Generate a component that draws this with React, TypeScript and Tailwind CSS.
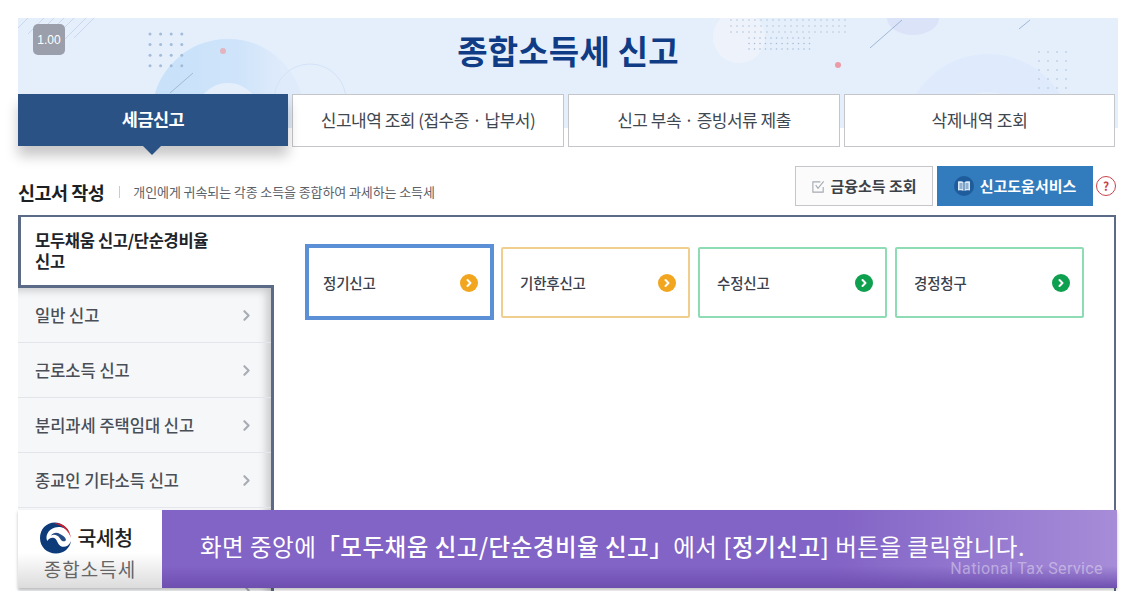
import React from "react";
import { ChevronRight } from "lucide-react";

const kr = { fontFamily: '"Noto Sans CJK KR", "Noto Sans", sans-serif' };

function Dots({ cols, rows, gap, r, color }: { cols: number; rows: number; gap: number; r: number; color: string }) {
  const out: React.ReactNode[] = [];
  for (let i = 0; i < cols; i++) for (let j = 0; j < rows; j++) out.push(<circle key={i + "-" + j} cx={i * gap + 2} cy={j * gap + 2} r={r} fill={color} />);
  return <g>{out}</g>;
}

function BandArt() {
  return (
    <svg className="absolute inset-0 h-full w-full" viewBox="0 0 1100 110" preserveAspectRatio="none">
      <defs>
        <linearGradient id="arc" x1="0" y1="0" x2="1" y2="0">
          <stop offset="0" stopColor="#c9e2fa" />
          <stop offset="0.6" stopColor="#cfe4fa" />
          <stop offset="1" stopColor="#dfebfb" />
        </linearGradient>
      </defs>
      <circle cx="210" cy="97" r="54" fill="none" stroke="url(#arc)" strokeWidth="44" />
      <circle cx="292" cy="82" r="36" fill="none" stroke="#d3e3f7" strokeWidth="1" />
      <path d="M0 10L10 0M10 16L26 0M16 20L36 0M26 20L46 0M36 20L56 0M46 22L68 0M56 20L76 0" stroke="#c9d8ee" strokeWidth="1" />
      <g transform="translate(130,14)"><Dots cols={4} rows={4} gap={10.600} r={1.500} color="#a3bcd9" /></g>
      <circle cx="205" cy="33" r="3" fill="#e3b4c0" />
      <path d="M152 75L175 55" stroke="#8ea9c9" strokeWidth="0.7" />
      <circle cx="721" cy="19" r="26" fill="#eef3fb" />
      <g transform="translate(711,0)"><Dots cols={20} rows={3} gap={6} r={0.800} color="#b2c3d9" /></g>
      <g transform="translate(729,18)"><Dots cols={12} rows={3} gap={5.500} r={0.800} color="#a9bdd6" /></g>
      <circle cx="820" cy="47" r="3" fill="#eb9aa6" />
      <ellipse cx="895" cy="0" rx="26" ry="17" fill="#dbe3f8" />
      <path d="M852 30L884 2M1001 11L1012 2" stroke="#8ea9c9" strokeWidth="0.8" />
      <circle cx="970" cy="121" r="66" fill="none" stroke="#dfebfc" strokeWidth="38" />
      <g transform="translate(1019,32)"><Dots cols={4} rows={5} gap={9} r={0.800} color="#a9bdd6" /></g>
    </svg>
  );
}

function Card({ label, border, dot, active }: { label: string; border: string; dot: string; active?: boolean }) {
  return (
    <div className={`flex w-[189px] items-center justify-between bg-white pt-[1px] ${border} ${active ? "h-[76px] pl-[14px] pr-[12px]" : "h-[71px] pl-[17px] pr-[12px]"}`}>
      <span className="text-[14.5px] font-medium tracking-[-0.2px] text-[#3a414c]">{label}</span>
      <span className={`flex h-[18px] w-[18px] items-center justify-center rounded-full ${dot}`}>
        <ChevronRight size={12} strokeWidth={4} className="text-white" />
      </span>
    </div>
  );
}

function Row({ label }: { label?: string }) {
  return (
    <div className="flex h-[55px] shrink-0 items-center justify-between border-b border-[#e3e5ea] pl-[17px] pr-[16px]">
      <span className="pt-[1px] text-[16.5px] font-medium text-[#4a4f57]">{label}</span>
      <ChevronRight size={17} strokeWidth={3} className="text-[#a8adb5]" />
    </div>
  );
}

function Tab({ label }: { label: string }) {
  return (
    <div className="flex h-[53px] w-[272px] items-center justify-center border border-[#c4c6ca] bg-white pb-[1px] text-[17px] tracking-[-0.5px] text-[#3f4750]">
      {label}
    </div>
  );
}

export default function App() {
  return (
    <div className="relative h-[591px] w-[1128px] overflow-hidden bg-white pl-[18px] pt-[18px]" style={kr}>
      <div className="w-[1100px]">
        {/* banner */}
        <div className="relative h-[110px] w-[1100px] bg-[#e5effc]">
          <BandArt />
          <div className="absolute left-[15px] top-[6px] flex h-[31px] w-[32px] items-center justify-center rounded-[5px] bg-[#9a9fab] text-[12px] text-white" style={{ fontFamily: '"Liberation Sans", sans-serif' }}>
            1.00
          </div>
          <div className="relative flex h-[76px] items-center justify-center pb-[10px] text-[33px] font-bold tracking-[0.2px] text-[#0f3c85]">
            종합소득세 신고
          </div>
          {/* tabs */}
          <div className="relative flex gap-[4px]">
            <div className="relative flex h-[52px] w-[270px] items-center justify-center bg-[#2a5285] pb-[1px] text-[17.5px] font-bold tracking-[-0.5px] text-white shadow-[0_10px_12px_rgba(0,0,0,0.22)]">
              세금신고
              <span className="absolute left-[125px] top-[52px] h-0 w-0 border-x-[9px] border-t-[9px] border-x-transparent border-t-[#2a5285]" />
            </div>
            <Tab label="신고내역 조회 (접수증 · 납부서)" />
            <Tab label="신고 부속 · 증빙서류 제출" />
            <div className="flex h-[53px] w-[271px] items-center justify-center border border-[#c4c6ca] bg-white pb-[1px] text-[17px] tracking-[-0.2px] text-[#3f4750]">
              삭제내역 조회
            </div>
          </div>
        </div>

        {/* heading row */}
        <div className="flex h-[87px] items-start justify-between pt-[38px]">
          <div className="mt-[13px] flex items-center">
            <span className="text-[18.5px] font-bold leading-[26px] tracking-[-0.5px] text-[#1c1f24]">신고서 작성</span>
            <span className="ml-[15px] h-[12px] w-px bg-[#c9ccd1]" />
            <span className="ml-[13px] text-[13px] tracking-[-0.1px] text-[#5c6168]">개인에게 귀속되는 각종 소득을 종합하여 과세하는 소득세</span>
          </div>
          <div className="flex items-center pr-[2px]">
            <div className="flex h-[40px] w-[138px] items-center justify-center gap-[4px] border border-[#c4c6ca] bg-[#fbfbfb] text-[15px] font-bold text-[#3c4148]">
              <svg width="15" height="15" viewBox="0 0 16 16" fill="none" stroke="#a6abb2" strokeWidth="1.200">
                <path d="M13 8.500V14H2V3H10" />
                <path d="M5 6.500L7.500 10L13.500 2.500" />
              </svg>
              금융소득 조회
            </div>
            <div className="ml-[4px] flex h-[40px] w-[156px] items-center justify-center gap-[6px] bg-[#327bbd] text-[15px] font-bold text-white">
              <span className="flex h-[20px] w-[20px] items-center justify-center rounded-full bg-[#1f5c9b]">
                <svg width="14" height="12" viewBox="0 0 14 12">
                  <path fill="#dbe8f5" d="M1 1.500C3 1 5.500 1.200 6.500 2.200V11C5.500 10.200 3 10 1 10.500ZM13 1.500C11 1 8.500 1.200 7.500 2.200V11C8.500 10.200 11 10 13 10.500Z" />
                  <path stroke="#1f5c9b" strokeWidth="0.800" fill="none" d="M2.500 4H5.500M2.500 6H5.500M2.500 8H5.500M8.500 4H11.500M8.500 6H11.500M8.500 8H11.500" />
                </svg>
              </span>
              신고도움서비스
            </div>
            <span className="ml-[3px] flex h-[20px] w-[20px] items-center justify-center rounded-full border-[1.5px] border-[#c9434b] text-[12px] font-bold leading-none text-[#c9434b]">?</span>
          </div>
        </div>
      </div>

      {/* main panel */}
      <div className="flex h-[400px] w-[1098px] border-[2.5px] border-b-0 border-l-0 border-[#5b6b87] bg-white">
        <div className="flex w-[256px] shrink-0 flex-col">
          <div className="flex h-[68px] shrink-0 items-center break-keep border-l-[3px] border-[#5b6b87] bg-white pl-[14px] pr-[40px] text-[16.5px] font-bold leading-[21px] tracking-[-0.3px] text-[#202329]">
            모두채움 신고/단순경비율 신고
          </div>
          <div className="flex min-h-0 flex-1 flex-col border-r-[3px] border-t-[3px] border-[#5b6b87] bg-[#f6f7f9] shadow-[inset_-10px_8px_10px_-6px_rgba(0,0,0,0.2)]">
            <Row label="일반 신고" />
            <Row label="근로소득 신고" />
            <Row label="분리과세 주택임대 신고" />
            <Row label="종교인 기타소득 신고" />
            <Row />
            <Row label="동산 · 부동산임대소득 세액 신고" />
          </div>
        </div>
        <div className="flex items-start gap-[7px] pl-[31px] pt-[27px]">
          <Card label="정기신고" border="border-[4px] border-[#5b8fd6]" dot="bg-[#f2a51f]" active />
          <div className="mt-[3px]">
            <Card label="기한후신고" border="rounded-[2px] border-2 border-[#f0cf8e]" dot="bg-[#f2a51f]" />
          </div>
          <div className="ml-[1px] mt-[3px]">
            <Card label="수정신고" border="rounded-[2px] border-2 border-[#8ddcb3]" dot="bg-[#0fa04f]" />
          </div>
          <div className="ml-[1px] mt-[3px]">
            <Card label="경정청구" border="rounded-[2px] border-2 border-[#8ddcb3]" dot="bg-[#0fa04f]" />
          </div>
        </div>
      </div>

      {/* caption overlay */}
      <div className="absolute left-[18px] top-[510px] flex h-[78px] w-[1099px] shadow-[0_2px_3px_rgba(0,0,0,0.25)]">
        <div className="flex w-[144px] flex-col items-center bg-gradient-to-b from-white from-55% to-[#dcdcdc] pt-[11px]">
          <div className="-ml-[8px] flex items-center gap-[5px]">
            <svg width="33" height="33" viewBox="0 0 33 33">
              <path d="M16 1.500C7 1.500 1 8.500 1 17C1 26 8 32.500 17 32.500C25 32.500 31 27 32 20C30 25.500 25 27 21.500 25C18 23 18.500 18 15 17C12 16.200 9.500 18 8.200 20C6 15 9 8.500 16 6.500C22 4.800 28 7.500 31 12.500C28 5.500 22 1.500 16 1.500Z" fill="#0d3a78" />
              <path d="M15 2.500C23 1 30.500 7 32 17C29.500 9.500 23 4 15 2.500Z" fill="#d3212d" />
              <path d="M21 13C18 11 14 11.500 12 14.500C15 13 19 14 21 17.500C23 21 26 21 27 19C26.500 16 24 14.500 21 13Z" fill="#0d3a78" opacity="0.900" />
            </svg>
            <span className="text-[20.5px] font-medium leading-none tracking-[-0.5px] text-[#222]">국세청</span>
          </div>
          <span className="mt-[3px] text-[19px] font-normal leading-[24px] tracking-[1px] text-[#666]">종합소득세</span>
        </div>
        <div className="relative flex flex-1 items-center bg-gradient-to-r from-[#8263c6] from-70% to-[#a78cd8] pb-[4px] pl-[38px] text-[23.5px] font-normal tracking-[0.5px] text-white">
          <div className="absolute inset-x-0 bottom-0 h-[22px] bg-gradient-to-b from-transparent to-[#6e4fb0]" />
          <span className="relative">
            화면 중앙에<span className="font-medium">「모두채움 신고/단순경비율 신고」</span>에서 <span className="font-medium">[정기신고]</span> 버튼을 클릭합니다.
          </span>
          <span className="absolute bottom-[7px] right-[14px] text-[16px] font-normal tracking-[0.4px] text-white/40" style={{ fontFamily: '"Roboto", sans-serif' }}>National Tax Service</span>
        </div>
      </div>
    </div>
  );
}
